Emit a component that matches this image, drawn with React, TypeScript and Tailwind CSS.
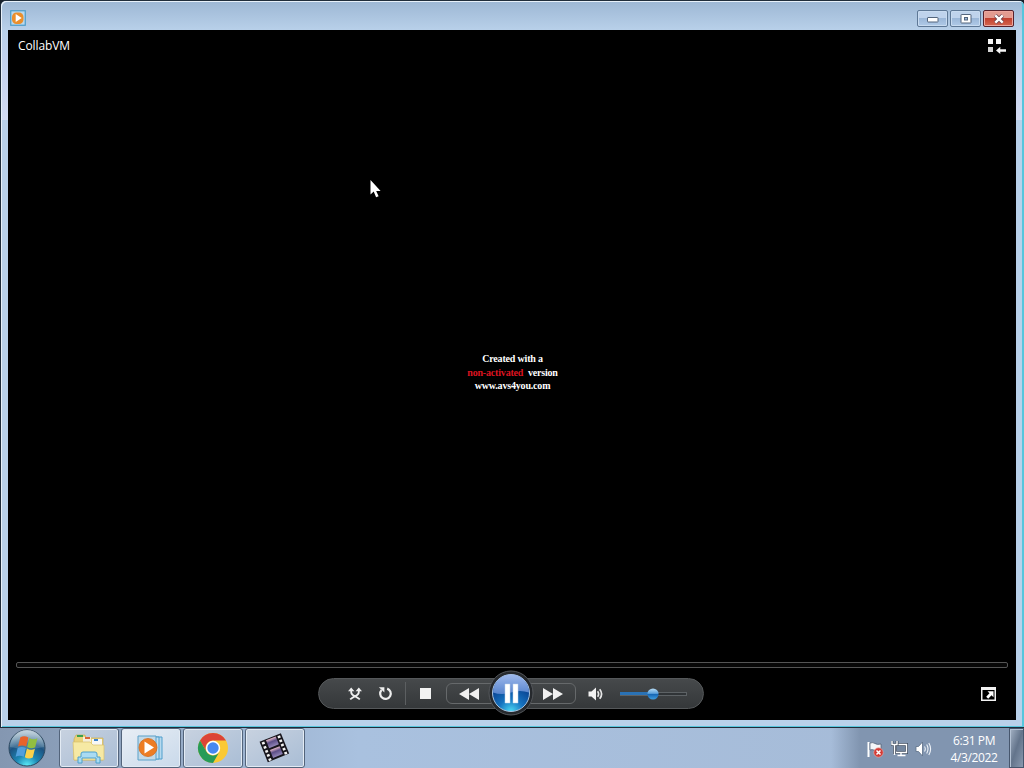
import { ReactNode } from "react";

function PlayerIcon() {
  return (
    <svg width="16" height="16" viewBox="0 0 16 16">
      <rect x="0.75" y="0.75" width="14.5" height="14.5" fill="#b9d9ee" stroke="#4a9cc9" strokeWidth="1.2" />
      <rect x="2" y="2.5" width="11.5" height="11.5" rx="4.5" fill="#ea8f2c" />
      <path d="M5.7 4l6 4-6 4z" fill="#fff" />
    </svg>
  );
}

function CaptionButton({ close, children }: { close?: boolean; children: ReactNode }) {
  return (
    <div
      className={`flex h-[17px] w-[31px] items-center justify-center rounded-[2px] border ${
        close
          ? "border-[#56222c] bg-linear-to-b from-[#e39b90] from-45% via-[#c2402f] via-50% to-[#d4664f] shadow-[inset_0_0_0_1px_#eda79e]"
          : "border-[#5e7896] bg-linear-to-b from-[#bfd3ec] from-45% via-[#9bb7d8] via-50% to-[#b0cae8] shadow-[inset_0_0_0_1px_#c8dbf0]"
      }`}
    >
      {children}
    </div>
  );
}

function TitleBar() {
  return (
    <header className="flex h-[30px] shrink-0 items-start justify-between pr-[10px] pl-[9px]">
      <div className="mt-[10px]">
        <PlayerIcon />
      </div>
      <div className="mt-[10px] flex gap-[2px]">
        <CaptionButton>
          <svg width="12" height="6" viewBox="0 0 12 6" className="mt-[3px]">
            <rect x="0.5" y="0.5" width="10.5" height="4.5" rx="0.5" fill="#fff" stroke="#53657d" />
          </svg>
        </CaptionButton>
        <CaptionButton>
          <svg width="12" height="10" viewBox="0 0 12 10">
            <rect x="1" y="0.5" width="10" height="8.5" rx="0.5" fill="#fff" stroke="#53657d" />
            <rect x="4.5" y="3.5" width="3" height="2.5" fill="#9bb7d8" stroke="#53657d" />
          </svg>
        </CaptionButton>
        <CaptionButton close>
          <svg width="12" height="10" viewBox="0 0 12 10">
            <path d="M2.3 1.4l7.4 7.2M9.7 1.4L2.3 8.6" stroke="#67414c" strokeWidth="4" />
            <path d="M2.3 1.4l7.4 7.2M9.7 1.4L2.3 8.6" stroke="#fff" strokeWidth="2.4" />
          </svg>
        </CaptionButton>
      </div>
    </header>
  );
}

function LibraryIcon() {
  return (
    <svg width="18" height="15" viewBox="0 0 18 15" fill="#f6f6f6">
      <path d="M0 0h5v5H0zM8 0h5v5H8z" />
      <path d="M0 8h5v5H0z" fill="#d4d4d4" />
      <path d="M8 11.4L12.3 7.8v2.4H18v2.6h-5.7v2.2z" />
    </svg>
  );
}

function ShuffleIcon() {
  return (
    <svg width="14" height="14" viewBox="0 0 14 14" fill="none" stroke="#eee" strokeWidth="1.8">
      <path d="M3.2 3v2.2C3.2 9 8 9 11.8 12.4M10.8 3v2.2C10.8 9 6 9 2.2 12.4" />
      <path d="M0 4.3L3.2 0.5l3.2 3.8zM7.6 4.3l3.2-3.8L14 4.3z" fill="#eee" stroke="none" />
    </svg>
  );
}

function RepeatIcon() {
  return (
    <svg width="15" height="15" viewBox="0 0 15 15">
      <path d="M9.2 2.6A5.3 5.3 0 1 1 3.6 4" fill="none" stroke="#eee" strokeWidth="2.2" />
      <path d="M0.8 1.2h5.6v5.3z" fill="#eee" />
    </svg>
  );
}

function VolumeIcon() {
  return (
    <svg width="16" height="14" viewBox="0 0 16 14">
      <path d="M0.5 4.5h3L8 0.5v13L3.5 9.5h-3z" fill="#f2f2f2" />
      <path d="M9.6 4.2q2 2.8 0 5.6M11.7 2.2q3.8 4.8 0 9.6" fill="none" stroke="#e6e6e6" strokeWidth="1.7" />
    </svg>
  );
}

function PauseButton() {
  return (
    <svg width="46" height="46" viewBox="0 0 46 46" className="absolute top-[-14px] left-[41px]">
      <defs>
        <linearGradient id="pauseTop" x2="0" y2="1">
          <stop offset="0" stopColor="#9fb9ec" />
          <stop offset="1" stopColor="#5784cd" />
        </linearGradient>
        <radialGradient id="pauseBase" cx=".5" cy="1" r=".75">
          <stop offset="0" stopColor="#4edbf5" />
          <stop offset=".45" stopColor="#1673c0" />
          <stop offset="1" stopColor="#083f8e" />
        </radialGradient>
      </defs>
      <circle cx="23" cy="23" r="22" fill="#26292d" stroke="#54575b" />
      <circle cx="23" cy="23" r="18.5" fill="url(#pauseBase)" stroke="#a9c3df" strokeWidth="1" />
      <path d="M5 22.5a18 18 0 0 1 36 0q-9-3-18 0t-18 0z" fill="url(#pauseTop)" />
      <path d="M17 14h5v19h-5zM25 14h5v19h-5z" fill="#fff" stroke="#bed3e8" strokeWidth=".5" />
    </svg>
  );
}

function Controls() {
  return (
    <div className="ml-[310px] flex h-[31px] w-[386px] items-center rounded-full border border-[#55585a] bg-linear-to-b from-[#46494b] to-[#35383a]">
      <div className="ml-[29px]">
        <ShuffleIcon />
      </div>
      <div className="ml-[16px]">
        <RepeatIcon />
      </div>
      <div className="ml-[12px] h-[23px] w-px bg-[#5c5f61]" />
      <div className="ml-[14px] h-[11px] w-[11px] bg-[#f2f2f2]" />
      <div className="relative ml-[15px] flex h-[21px] w-[130px] items-center justify-between rounded-[6px] border border-[#66696b] px-[12px]">
        <svg width="20" height="12" viewBox="0 0 20 12" fill="#f0f0f0">
          <path d="M10 0v12L0 6zM20 0v12L10 6z" />
        </svg>
        <svg width="20" height="12" viewBox="0 0 20 12" fill="#f0f0f0">
          <path d="M0 0v12l10-6zM10 0v12l10-6z" />
        </svg>
        <PauseButton />
      </div>
      <div className="ml-[12px]">
        <VolumeIcon />
      </div>
      <svg width="67" height="14" viewBox="0 0 67 14" className="ml-[16px]">
        <defs>
          <linearGradient id="knob" x2="0" y2="1">
            <stop offset="0" stopColor="#b7dcf5" />
            <stop offset=".45" stopColor="#5ba0db" />
            <stop offset=".5" stopColor="#1463b2" />
            <stop offset="1" stopColor="#3f9fe0" />
          </linearGradient>
        </defs>
        <rect x="0.5" y="5.5" width="66" height="3" fill="#303437" stroke="#5d6265" />
        <rect x="0" y="5" width="32" height="3" fill="#2a72b5" />
        <circle cx="33" cy="7" r="5.6" fill="url(#knob)" />
      </svg>
    </div>
  );
}

function Cursor() {
  return (
    <svg width="12" height="19" viewBox="0 0 12 19" className="absolute top-[150px] left-[362px]">
      <path d="M0.5 0v14.5l3.2-3 2.4 5.7 2.5-1-2.4-5.2h4.4z" fill="#fff" />
    </svg>
  );
}

function Player() {
  return (
    <main className="relative flex flex-1 flex-col bg-black text-white">
      <div className="flex h-[40px] items-start justify-between pt-[8px] pr-[10px] pl-[10px]">
        <span className="font-['Open_Sans','Noto_Sans',sans-serif] text-[12px] leading-[16px] tracking-[-0.1px]">
          CollabVM
        </span>
        <div className="mt-px">
          <LibraryIcon />
        </div>
      </div>

      {/* Video */}
      <div className="flex flex-1 flex-col items-center pt-[282px] pl-[1px] font-['Liberation_Serif',serif] text-[10px] leading-[13.5px] font-bold tracking-[-0.18px]">
        <p>Created with a</p>
        <p className="whitespace-pre">
          <span className="text-[#dc1420]">non-activated</span>
          {"  version"}
        </p>
        <p>www.avs4you.com</p>
      </div>

      {/* Seek bar */}
      <div className="mx-[8px] h-[6px] shrink-0 rounded-[2px] border border-[#555] bg-[#080808]" />

      <div className="mt-[10px] mb-[11px] flex items-center justify-between pr-[20px]">
        <Controls />
        <svg width="15" height="14" viewBox="0 0 15 14">
          <rect x="0.75" y="0.75" width="13.5" height="12.5" fill="#000" stroke="#f2f2f2" strokeWidth="1.5" />
          <path d="M0 0h15v3H0z" fill="#f2f2f2" />
          <path d="M6.5 4.3h6v6l-2-2-3.3 3.4-2-2 3.3-3.4z" fill="#fff" />
        </svg>
      </div>
      <Cursor />
    </main>
  );
}

function StartOrb() {
  return (
    <svg width="38" height="38" viewBox="0 0 38 38">
      <defs>
        <radialGradient id="orb" cx=".5" cy="1" r=".9">
          <stop offset="0" stopColor="#5ff0fa" />
          <stop offset=".35" stopColor="#1d87b4" />
          <stop offset=".7" stopColor="#1d5381" />
          <stop offset="1" stopColor="#7696ac" />
        </radialGradient>
        <linearGradient id="orbShine" x2="0" y2="1">
          <stop offset="0" stopColor="#e4edf3" stopOpacity=".75" />
          <stop offset="1" stopColor="#8fb0c4" stopOpacity=".25" />
        </linearGradient>
      </defs>
      <circle cx="19" cy="19" r="18" fill="url(#orb)" stroke="#2d485f" />
      <path d="M2 18a17 17 0 0 1 34 0q-17 4-34 0z" fill="url(#orbShine)" />
      <path d="M12.4 8.2q4-2 8 .3l-2.2 9q-4-2-8.2 0z" fill="#e9632a" />
      <path d="M21.4 9q4 2.2 8 .3l-2.2 9q-4 2-8-.3z" fill="#91bf40" />
      <path d="M9.7 19q4-2 8.2 0l-2.1 8.8q-4.2-2-8.2 0z" fill="#529fdc" />
      <path d="M18.9 19.5q4 2.2 8 .3l-2.1 8.8q-4 2-8-.3z" fill="#fad14b" />
    </svg>
  );
}

function FolderIcon() {
  return (
    <svg width="34" height="31" viewBox="0 0 34 31">
      <path d="M2 6l2-4h9l1 3h17v22H2z" fill="#ead27a" stroke="#c9ae58" strokeWidth=".7" />
      <path d="M5 2h6v2H5z" fill="#39a050" />
      <path d="M11 4h8v6h-8z" fill="#f5efda" />
      <path d="M13 4h5v2h-5z" fill="#d9643a" />
      <path d="M20 6h10v6H20z" fill="#f8f8f5" />
      <path d="M22 6h4v2h-4z" fill="#3c83cc" />
      <path d="M1 9h17l3 3h11v15H2z" fill="#f6e9a4" stroke="#d8c16e" strokeWidth=".7" />
      <path d="M6 30v-6h3v-3q0-2 2-2h12q2 0 2 2v3h3v6h-4v-5H10v5z" fill="#a9dbf2" stroke="#4ca0cd" />
    </svg>
  );
}

function MediaPlayerIcon() {
  return (
    <svg width="28" height="26" viewBox="0 0 28 26">
      <path d="M8 2h17v22H8z" fill="#b7d9ee" stroke="#4f9fcd" />
      <path d="M5 2h17v22H5z" fill="#c3dff0" stroke="#4f9fcd" />
      <path d="M1 1h18v24H1z" fill="#c3d9e7" stroke="#5ba1c9" />
      <circle cx="11" cy="12.5" r="9" fill="#ed7d24" stroke="#d06a1c" strokeWidth=".8" />
      <path d="M7.5 6.5l9.5 6-9.5 6z" fill="#fff" />
    </svg>
  );
}

function ChromeIcon() {
  return (
    <svg width="32" height="32" viewBox="0 0 32 32">
      <circle cx="16" cy="16" r="15" fill="#fbc934" />
      <path d="M3 8.5A15 15 0 0 1 29 8.5H16a7.5 7.5 0 0 0-6.5 11.2z" fill="#dc4437" />
      <path d="M3 8.5l6.5 11.2a7.5 7.5 0 0 0 13 0L16 31A15 15 0 0 1 3 8.5z" fill="#269b58" />
      <circle cx="16" cy="16" r="7.2" fill="#fff" />
      <circle cx="16" cy="16" r="5.7" fill="#4688f1" />
    </svg>
  );
}

function FilmIcon() {
  return (
    <svg width="32" height="32" viewBox="0 0 32 32">
      <defs>
        <linearGradient id="film" x2="0" y2="1">
          <stop offset="0" stopColor="#e6b9c9" />
          <stop offset=".4" stopColor="#5c4e87" />
          <stop offset="1" stopColor="#9185b7" />
        </linearGradient>
      </defs>
      <g transform="rotate(-22 16 16)">
        <rect x="4" y="4.5" width="23" height="22" fill="#17151c" />
        <rect x="10.5" y="5.5" width="10.5" height="8.5" fill="url(#film)" />
        <rect x="10.5" y="16" width="10.5" height="8.5" fill="url(#film)" />
        <path d="M7 6v20M24 6v20" stroke="#f4f4f4" strokeWidth="2.8" strokeDasharray="2.4 2" />
      </g>
    </svg>
  );
}

function TaskButton({ active, children }: { active?: boolean; children: ReactNode }) {
  return (
    <div
      className={`flex h-[40px] w-[60px] items-center justify-center rounded-[3px] border border-[#53647b] shadow-[inset_0_0_0_1px_#e3ebf4] ${
        active
          ? "bg-linear-to-br from-[#e8eef5] to-[#c9d9ea]"
          : "bg-linear-to-br from-[#c8d2e0] to-[#a9bdd5]"
      }`}
    >
      <div className="-ml-px flex">{children}</div>
    </div>
  );
}

function Tray() {
  return (
    <div className="flex h-full items-center bg-linear-to-r from-[#8195b000] to-[#8195b0] to-15% pl-[36px]">
      <svg width="17" height="17" viewBox="0 0 17 17" className="mt-[2px]">
        <path d="M1.5 1v15" stroke="#fff" strokeWidth="2" />
        <path d="M3 2q3-1 5 .5t6 .5v7q-3 1-6-.5T3 9z" fill="#f3f5f8" stroke="#4a596e" strokeWidth=".7" />
        <circle cx="11.5" cy="11.5" r="4.7" fill="#d33b36" stroke="#f0b0a8" strokeWidth=".6" />
        <path d="M9.5 9.5l4 4M13.5 9.5l-4 4" stroke="#fff" strokeWidth="1.5" />
      </svg>
      <svg width="17" height="16" viewBox="0 0 17 16" className="mt-[2px] ml-[7px]" fill="none">
        <path d="M4.5 3.5h11v8h-11z" fill="#73869f" stroke="#414e61" strokeWidth="3" />
        <path d="M4.5 3.5h11v8h-11zM10 12v2.5M6.5 14.5h8" stroke="#fff" strokeWidth="1.4" />
        <path d="M1 0v3.5h5V0M3.5 3.5V13" stroke="#414e61" strokeWidth="3" />
        <path d="M1 0v3.5h5V0M3.5 3.5V14" stroke="#fff" strokeWidth="1.4" />
      </svg>
      <svg width="17" height="16" viewBox="0 0 17 16" className="mt-[2px] ml-[7px]">
        <path d="M1 5.5h2.5l4-4.5v14l-4-4.5H1z" fill="#fff" stroke="#5c6e86" strokeWidth=".8" />
        <path d="M9.5 5.5q1.6 2.5 0 5M11.7 3.5q2.6 4.5 0 9M13.8 2q3.6 6 0 12" fill="none" stroke="#eef3f8" strokeWidth="1.1" />
      </svg>
      <div className="mt-[2px] ml-[15px] w-[54px] text-center font-['Open_Sans','Noto_Sans',sans-serif] text-[12px] leading-[17px] tracking-[-0.4px] whitespace-nowrap text-white">
        <p>6:31 PM</p>
        <p>4/3/2022</p>
      </div>
      <div className="ml-[8px] h-full w-[15px] border border-[#46566d] bg-linear-to-br from-[#a5b3c5] via-[#63748b] to-[#8999af] shadow-[inset_1px_1px_0_#b4c2d4]" />
    </div>
  );
}

function Taskbar() {
  return (
    <footer className="flex h-[40px] items-center justify-between bg-linear-to-r from-[#8497b1] via-[#a9c1df] via-35% to-[#a5bad6]">
      <div className="flex items-center gap-[2px]">
        <div className="w-[57px] pl-[8px]">
          <StartOrb />
        </div>
        <TaskButton>
          <FolderIcon />
        </TaskButton>
        <TaskButton active>
          <MediaPlayerIcon />
        </TaskButton>
        <TaskButton>
          <ChromeIcon />
        </TaskButton>
        <TaskButton>
          <FilmIcon />
        </TaskButton>
      </div>
      <Tray />
    </footer>
  );
}

export default function App() {
  return (
    <div className="flex h-[768px] w-[1024px] flex-col overflow-hidden bg-[#17202b]">
      <div className="flex h-[728px] flex-col rounded-t-[6px] border-t border-b border-l border-[#202d3b]">
        <div className="flex flex-1 flex-col rounded-t-[5px] bg-[linear-gradient(#9db7d4,#b9d1ea_30px,#c3d2ee_60px,#d3dbf2_119px,#b9d1ea_119px)] pr-[8px] pb-[7px] pl-[7px] shadow-[inset_1px_1px_0_#e8f1fa,inset_-2px_-1px_0_#56c5dc]">
          <div className="-mr-[8px] -ml-[7px] -mt-px">
            <TitleBar />
          </div>
          <Player />
        </div>
      </div>
      <Taskbar />
    </div>
  );
}
